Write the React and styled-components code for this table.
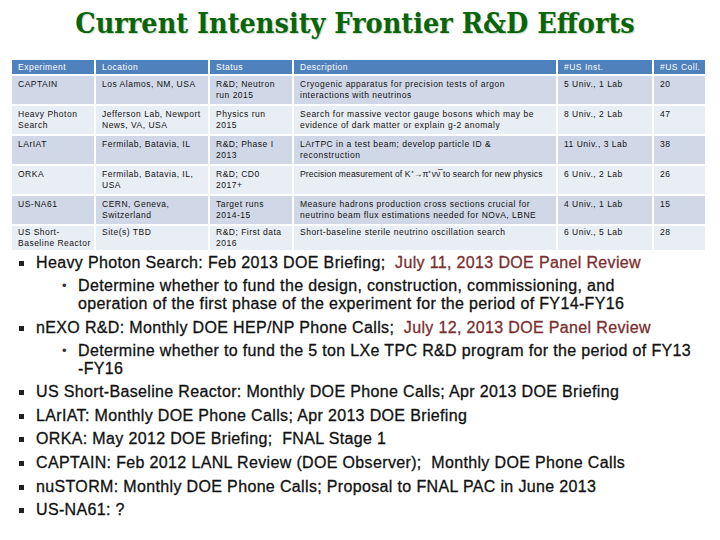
import React from 'react';
import styled, { createGlobalStyle } from 'styled-components';

const Global = createGlobalStyle`
  html, body { margin: 0; padding: 0; background: #ffffff; }
`;

const Page = styled.div`
  width: 720px;
  height: 540px;
  overflow: hidden;
  background: #ffffff;
  font-family: "Liberation Sans", Arial, sans-serif;
`;

const Title = styled.h1`
  margin: 0;
  padding: 5px 10px 0 0;
  height: 58px;
  box-sizing: border-box;
  text-align: center;
  font-family: "DejaVu Serif Condensed", "DejaVu Serif", serif;
  font-weight: bold;
  font-size: 28.5px;
  line-height: 36px;
  color: #0a650a;
  text-shadow: 1px 1px 1px #c8d6c8;
`;

const Table = styled.table`
  border-collapse: separate;
  border-spacing: 2px;
  table-layout: fixed;
  width: 697px;
  margin-left: 10px;
`;

const Th = styled.th`
  background: #4f81bd;
  color: #ffffff;
  font-weight: normal;
  text-align: left;
  vertical-align: middle;
  padding: 0 0 0 6px;
  height: 14px;
  font-size: 8.5px;
  letter-spacing: 0.5px;
  line-height: 11px;
  white-space: nowrap;
  overflow: hidden;
`;

const Td = styled.td`
  background: ${p => (p.$odd ? '#d0d8e8' : '#e9edf4')};
  color: #111;
  text-align: left;
  vertical-align: top;
  padding: ${p => (p.$tight ? '1px' : '3px')} 0 0 6px;
  font-size: 8.5px;
  letter-spacing: ${p => (p.$dense ? '0.15px' : '0.5px')};
  line-height: 11px;
  height: ${p => p.$h}px;
  box-sizing: border-box;
  white-space: nowrap;
  overflow: hidden;
`;

const List = styled.ul`
  list-style: none;
  margin: 0;
  padding: 0 8px 0 36px;
  font-size: 16px;
  letter-spacing: 0.35px;
  line-height: 18px;
  color: #111;
  -webkit-text-stroke: 0.3px #111;
`;

const Item = styled.li`
  position: relative;
  margin-top: ${p => (p.$first ? '2px' : '5.6px')};
  &::before {
    content: '';
    position: absolute;
    left: -17px;
    top: 7px;
    width: 5px;
    height: 5px;
    background: #222;
  }
`;

const SubList = styled.ul`
  list-style: none;
  margin: 0;
  padding: 0 0 0 42px;
`;

const SubItem = styled.li`
  position: relative;
  margin-top: 5px;
  &::before {
    content: '•';
    position: absolute;
    left: -16px;
    top: 0;
    font-size: 13px;
    color: #333;
    -webkit-text-stroke: 0;
  }
`;

const Red = styled.span`
  color: #7a2e2e;
  -webkit-text-stroke: 0.3px #7a2e2e;
`;

const columns = [82, 112, 82, 262, 94, 51];
const headers = ['Experiment', 'Location', 'Status', 'Description', '#US Inst.', '#US Coll.'];

// each cell is a list of the lines it shows
const rows = [
  [['CAPTAIN'], ['Los Alamos, NM, USA'], ['R&D; Neutron', 'run 2015'], ['Cryogenic apparatus for precision tests of argon', 'interactions with neutrinos'], ['5 Univ., 1 Lab'], ['20']],
  [['Heavy Photon', 'Search'], ['Jefferson Lab, Newport', 'News, VA, USA'], ['Physics run', '2015'], ['Search for massive vector gauge bosons which may be', 'evidence of dark matter or explain g-2 anomaly'], ['8 Univ., 2 Lab'], ['47']],
  [['LArIAT'], ['Fermilab, Batavia, IL'], ['R&D; Phase I', '2013'], ['LArTPC in a test beam; develop particle ID &', 'reconstruction'], ['11 Univ., 3 Lab'], ['38']],
  [['ORKA'], ['Fermilab, Batavia, IL,', 'USA'], ['R&D; CD0', '2017+'], ['Precision measurement of K\u207A\u2192\u03C0\u207A\u03BD\u03BD\u0305 to search for new physics'], ['6 Univ., 2 Lab'], ['26']],
  [['US-NA61'], ['CERN, Geneva,', 'Switzerland'], ['Target runs', '2014-15'], ['Measure hadrons production cross sections crucial for', 'neutrino beam flux estimations needed for NOvA, LBNE'], ['4 Univ., 1 Lab'], ['15']],
  [['US Short-', 'Baseline Reactor'], ['Site(s) TBD'], ['R&D; First data', '2016'], ['Short-baseline sterile neutrino oscillation search'], ['6 Univ., 5 Lab'], ['28']],
];

const nb = '\u00a0';

const Lines = ({ lines }) =>
  lines.map((l, k) => (
    <React.Fragment key={k}>
      {k > 0 && <br />}
      {l}
    </React.Fragment>
  ));

export default function App() {
  return (
    <Page>
      <Global />
      <Title>Current Intensity Frontier R&amp;D Efforts</Title>
      <Table>
        <colgroup>
          {columns.map((w, i) => (
            <col key={i} style={{ width: w }} />
          ))}
        </colgroup>
        <thead>
          <tr>
            {headers.map(h => (
              <Th key={h}>{h}</Th>
            ))}
          </tr>
        </thead>
        <tbody>
          {rows.map((r, i) => {
            const last = i === rows.length - 1;
            return (
              <tr key={i}>
                {r.map((c, j) => (
                  <Td
                    key={j}
                    $odd={i % 2 === 0}
                    $h={last ? 24 : 28}
                    $tight={last}
                    $dense={c.length === 1 && c[0].length > 52}
                  >
                    <Lines lines={c} />
                  </Td>
                ))}
              </tr>
            );
          })}
        </tbody>
      </Table>
      <List>
        <Item $first>
          Heavy Photon Search: Feb 2013 DOE Briefing;{nb} <Red>July 11, 2013 DOE Panel Review</Red>
          <SubList>
            <SubItem>
              Determine whether to fund the design, construction, commissioning, and
              <br />
              operation of the first phase of the experiment for the period of FY14-FY16
            </SubItem>
          </SubList>
        </Item>
        <Item>
          nEXO R&amp;D: Monthly DOE HEP/NP Phone Calls;{nb} <Red>July 12, 2013 DOE Panel Review</Red>
          <SubList>
            <SubItem>
              Determine whether to fund the 5 ton LXe TPC R&amp;D program for the period of FY13
              <br />
              -FY16
            </SubItem>
          </SubList>
        </Item>
        <Item>US Short-Baseline Reactor: Monthly DOE Phone Calls; Apr 2013 DOE Briefing</Item>
        <Item>LArIAT: Monthly DOE Phone Calls; Apr 2013 DOE Briefing</Item>
        <Item>ORKA: May 2012 DOE Briefing;{nb} FNAL Stage 1</Item>
        <Item>CAPTAIN: Feb 2012 LANL Review (DOE Observer);{nb} Monthly DOE Phone Calls</Item>
        <Item>nuSTORM: Monthly DOE Phone Calls; Proposal to FNAL PAC in June 2013</Item>
        <Item>US-NA61: ?</Item>
      </List>
    </Page>
  );
}
